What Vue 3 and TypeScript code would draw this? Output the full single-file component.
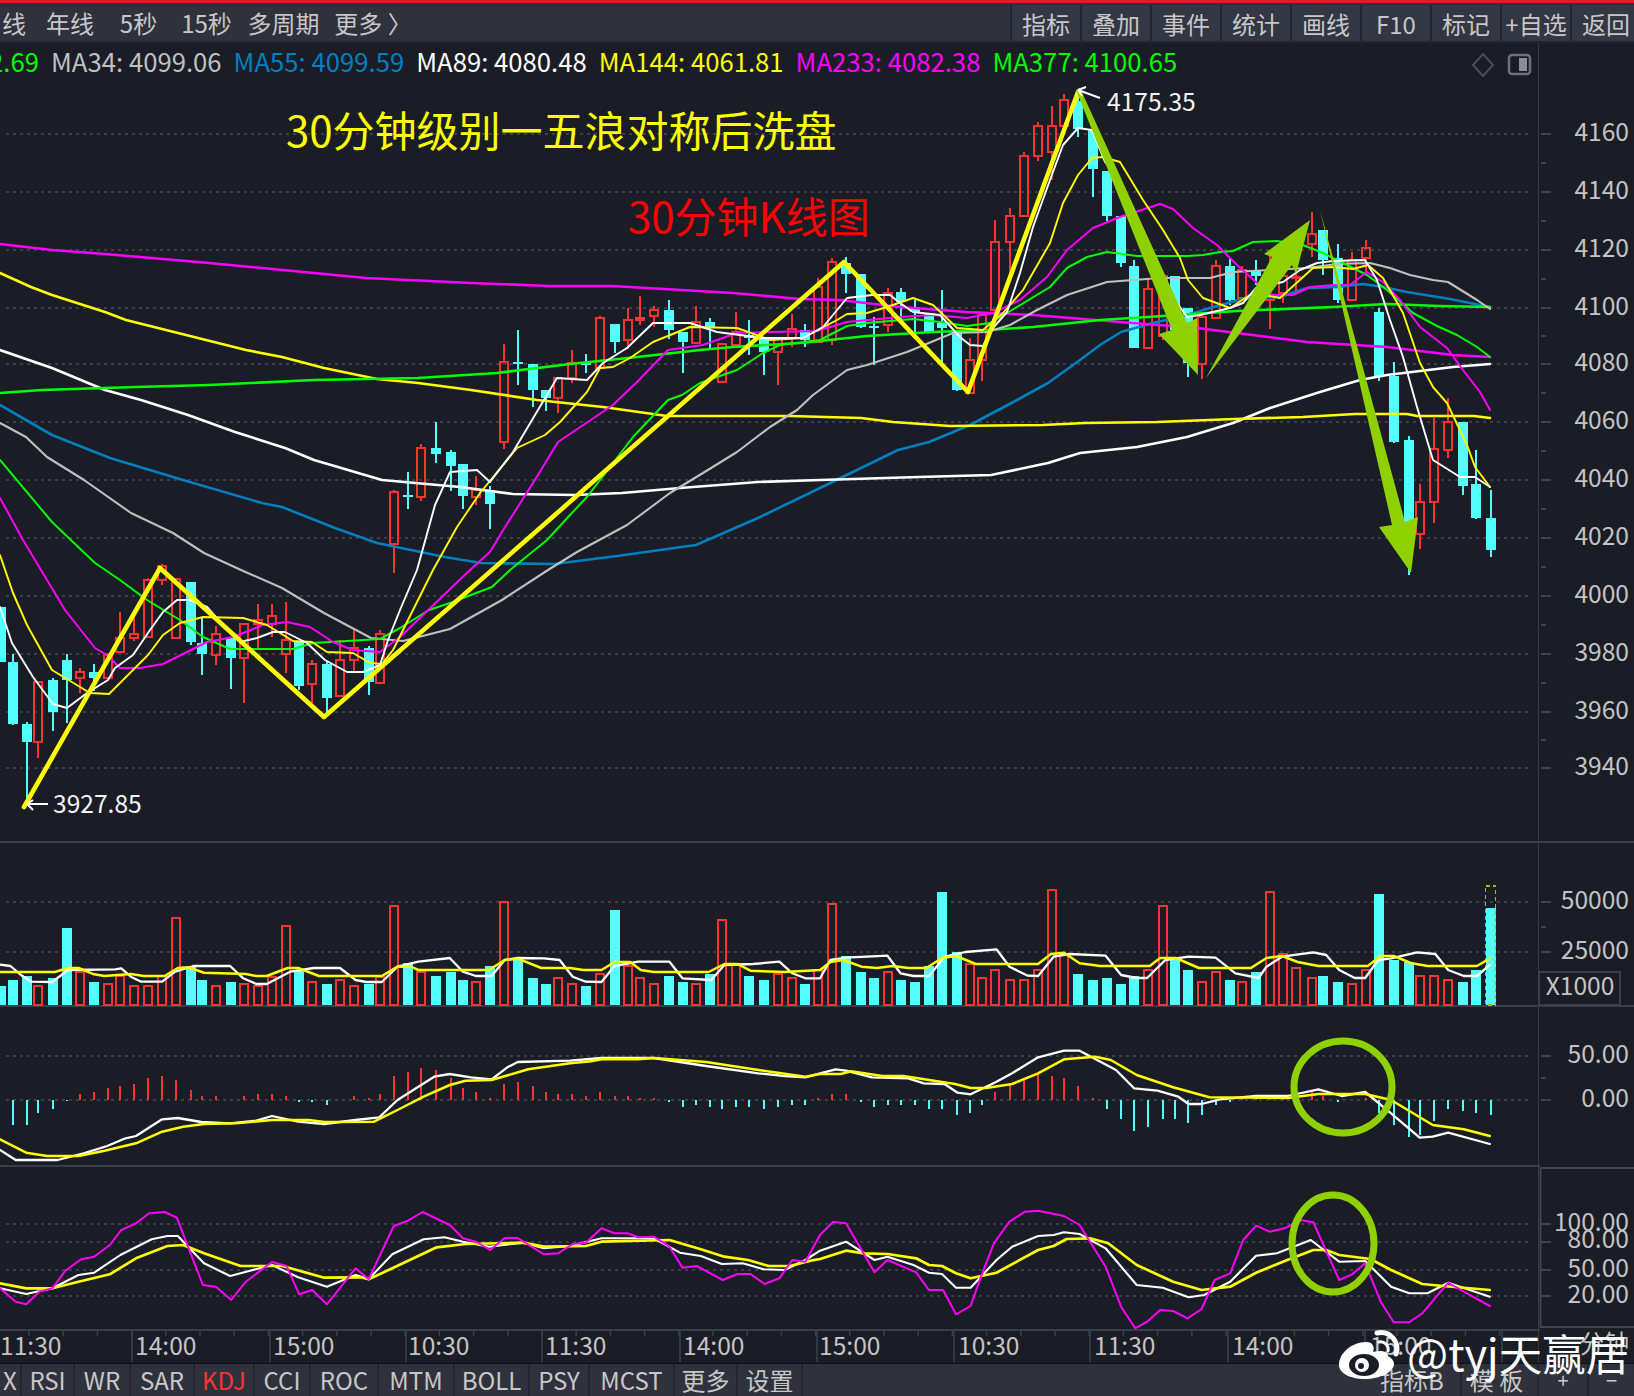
<script setup lang="ts">
type Candle = [number, number, number, number, number, number];

const periods = ['线', '年线', '5秒', '15秒', '多周期', '更多 〉'];
const tools = ['指标', '叠加', '事件', '统计', '画线', 'F10', '标记', '+自选', '返回'];
const indicators = ['X', 'RSI', 'WR', 'SAR', 'KDJ', 'CCI', 'ROC', 'MTM', 'BOLL', 'PSY', 'MCST', '更多', '设置'];
const extras = ['指标B', '模 板', '+', '−'];

const legend = [
  { text: '2.69', cls: 'green first' },
  { text: 'MA34: 4099.06', cls: 'grey' },
  { text: 'MA55: 4099.59', cls: 'blue' },
  { text: 'MA89: 4080.48', cls: 'white' },
  { text: 'MA144: 4061.81', cls: 'yellow' },
  { text: 'MA233: 4082.38', cls: 'magenta' },
  { text: 'MA377: 4100.65', cls: 'green' },
];

const candles: Candle[] = [
  [1,607,607,662,662,0],[13,654,662,724,725,0],[27,722,724,742,803,0],[38,681,682,742,758,1],[53,678,680,712,731,0],
  [66.5,654,660,680,723,0],[80,668,672,678,693,1],[94,664,672,678,691,0],[108,653,655,678,678,1],[120,612,638,652,652,1],
  [134,616,634,638,641,1],[148,578,580,637,637,1],[162,564,566,580,585,1],[176,579,579,638,638,1],[191,582,582,642,645,0],
  [202,617,643,654,675,0],[216,626,634,655,665,1],[231,638,638,658,689,0],[244,624,624,658,703,1],[258,604,620,624,650,1],
  [272,604,616,624,637,1],[286,602,640,654,673,1],[299,642,642,686,690,0],[312,660,664,684,703,1],[327,662,664,698,715,0],
  [340,640,660,696,696,1],[354,628,648,660,672,1],[369,646,648,682,695,0],[380,630,634,683,683,1],[394,490,492,544,573,1],
  [408,472,495,497,509,0],[421,444,448,497,501,1],[436,422,448,454,463,0],[451,450,452,466,491,0],[463,464,464,496,509,0],
  [476,476,490,497,505,1],[490,486,490,504,529,0],[504,344,362,442,449,1],[518,330,362,364,385,0],[533,364,364,390,407,0],
  [546,390,390,398,411,0],[558,378,378,398,413,1],[572,350,363,378,383,1],[586,354,363,365,373,0],[600,316,318,368,368,1],
  [615,324,324,342,353,0],[628,308,320,340,349,1],[640,296,318,320,325,1],[654,306,310,316,327,1],[669,300,310,330,339,0],
  [683,332,332,342,373,0],[696,306,322,343,343,1],[710,318,322,328,349,0],[722,344,344,382,382,1],[736,312,332,345,345,1],
  [749,320,335,338,355,0],[764,338,338,352,375,0],[778,338,338,352,385,1],[792,314,329,338,347,1],[805,324,330,340,347,0],
  [818,278,287,342,342,1],[832,258,262,340,345,1],[846,257,263,274,293,0],[861,274,274,327,328,0],[874,317,326,328,365,0],
  [888,288,293,325,332,1],[901,288,292,302,320,0],[915,300,307,312,332,0],[929,313,313,332,332,0],[942,290,323,328,363,0],
  [957,333,333,390,391,0],[970,338,360,393,394,1],[982,312,315,360,381,1],[995,220,242,310,310,1],[1010,208,216,242,273,1],
  [1024,152,156,216,216,1],[1038,122,126,156,161,1],[1052,106,126,152,180,1],[1064,94,100,126,126,1],[1078,90,101,129,137,0],
  [1093,129,129,169,197,0],[1107,171,171,216,221,0],[1121,216,216,263,267,0],[1134,260,266,348,348,0],[1148,280,289,348,348,1],
  [1163,276,276,336,340,1],[1175,276,276,330,330,0],[1188,308,308,363,377,0],[1202,315,317,364,379,1],[1216,260,266,318,318,1],
  [1230,259,266,300,305,0],[1242,266,270,298,298,1],[1256,260,270,276,285,0],[1270,256,297,300,329,1],[1283,264,276,293,303,1],
  [1296,257,277,278,293,1],[1312,212,234,244,257,1],[1323,230,230,260,275,0],[1338,244,258,300,303,0],[1352,252,260,300,300,1],
  [1366,240,248,258,273,1],[1379,308,312,377,381,0],[1394,362,376,442,443,0],[1409,436,440,525,575,0],[1420,484,502,534,549,1],
  [1434,418,449,502,523,1],[1448,398,422,450,458,1],[1463,422,422,486,495,0],[1476,450,484,518,519,0],[1490.5,490,518,550,557,0],
];

const volTops = [
  986,980,976,986,978,928,972,982,984,976,986,986,976,918,967,980,986,982,984,986,977,926,970,982,984,980,986,984,977,906,
  963,972,976,972,980,982,966,902,960,978,984,978,984,986,974,910,966,978,984,976,982,984,974,920,964,976,980,974,978,984,
  970,904,956,972,978,972,980,982,966,892,952,964,978,970,980,980,970,890,955,974,980,978,984,976,970,906,960,970,982,972,
  980,982,972,892,954,968,978,976,982,984,970,894,960,962,976,976,980,982,970,908,
];

const macdZ = [
  720,795,795,758,747,723,702,696,684,678,672,654,648,660,690,708,708,720,708,702,702,708,727,727,735,720,708,714,702,648,
  636,624,630,654,684,696,714,672,666,678,696,702,702,708,696,708,708,714,714,727,740,735,740,747,740,740,747,740,735,735,
  714,702,702,727,740,735,735,735,747,747,765,758,735,696,672,654,642,648,654,678,714,747,777,812,800,777,777,788,765,735,
  727,714,714,714,714,714,696,708,727,720,714,758,795,830,825,782,747,753,758,765,
];

const priceGrid = [
  { y: 134, t: '4160' }, { y: 192, t: '4140' }, { y: 250, t: '4120' }, { y: 308, t: '4100' },
  { y: 364, t: '4080' }, { y: 422, t: '4060' }, { y: 480, t: '4040' }, { y: 538, t: '4020' },
  { y: 596, t: '4000' }, { y: 654, t: '3980' }, { y: 712, t: '3960' }, { y: 768, t: '3940' },
];
const gridYs = [...priceGrid.map(g => g.y), 902, 952, 1056, 1100, 1224, 1242, 1270, 1296];
const minorTicks = [163, 221, 279, 336, 393, 451, 509, 567, 625, 683, 740, 927, 1078];
const axisLabels = [
  ...priceGrid.map(g => ({ y: g.y + 7, t: g.t })),
  { y: 909, t: '50000' }, { y: 959, t: '25000' }, { y: 1063, t: '50.00' }, { y: 1107, t: '0.00' },
  { y: 1231, t: '100.00' }, { y: 1248, t: '80.00' }, { y: 1277, t: '50.00' }, { y: 1303, t: '20.00' },
];
const timeLabels = [
  { x: 0, t: '11:30' }, { x: 135, t: '14:00' }, { x: 273, t: '15:00' }, { x: 408, t: '10:30' },
  { x: 545, t: '11:30' }, { x: 683, t: '14:00' }, { x: 819, t: '15:00' }, { x: 958, t: '10:30' },
  { x: 1094, t: '11:30' }, { x: 1232, t: '14:00' }, { x: 1370, t: '15:00' },
];
const longTicks = [132, 270, 406, 542, 680, 817, 954, 1090, 1228, 1365, 1502];
const shortTicks: number[] = [];
for (let x = 29; x < 1530; x += 34.2) shortTicks.push(x);

const real = (flat: number[]) => {
  const out: string[] = [];
  for (let i = 0; i < flat.length; i += 2) out.push(`${flat[i]},${flat[i + 1]}`);
  return out.join(' ');
};
const zoomed = (left: number[], right: number[], oy: number) => {
  const out: string[] = [];
  for (let i = 0; i < left.length; i += 2) out.push(`${(left[i] / 1.912).toFixed(1)},${(oy + left[i + 1] / 3).toFixed(1)}`);
  for (let i = 0; i < right.length; i += 2) out.push(`${(820 + right[i] / 1.926).toFixed(1)},${(oy + right[i + 1] / 3).toFixed(1)}`);
  return out.join(' ');
};

const maLines = [
  { c: '#0080c0', w: 2.6, p: real([0,405,52,435,110,458,183,480,262,503,282,507,335,528,377,543,445,557,481,563,554,564,617,556,696,545,758,518,820,488,898,450,929,442,970,425,1017,400,1048,383,1080,360,1100,345,1121,332,1153,323,1187,315,1220,305,1247,298,1280,297,1307,288,1337,287,1363,284,1383,287,1407,292,1450,299,1490,307]) },
  { c: '#ffffff', w: 2.6, p: real([0,350,52,368,105,390,141,400,188,415,235,432,285,448,314,460,382,480,460,487,513,494,575,495,622,493,680,488,758,482,820,480,919,477,991,475,1048,463,1080,453,1137,447,1187,437,1233,423,1270,408,1320,392,1360,380,1387,375,1453,367,1490,364]) },
  { c: '#ffff00', w: 2.6, p: real([0,273,31,287,52,295,105,312,126,320,178,333,246,350,282,357,324,368,377,379,418,383,471,390,537,400,603,407,667,416,790,416,861,418,893,422,950,426,1043,425,1085,423,1157,422,1235,419,1303,417,1355,414,1407,414,1417,416,1474,416,1490,418]) },
  { c: '#ff00ff', w: 2.6, p: real([0,244,52,250,105,254,209,263,314,273,366,278,471,283,549,286,612,286,733,293,800,299,840,300,900,307,967,312,1033,315,1083,319,1133,323,1197,328,1237,333,1307,342,1387,347,1453,355,1490,357]) },
  { c: '#00ff00', w: 2.6, p: real([0,393,42,390,136,387,209,385,314,380,418,378,497,373,570,364,628,358,700,350,733,347,800,343,867,336,933,332,987,330,1033,327,1100,320,1163,316,1237,311,1333,307,1387,304,1440,306,1490,307]) },
  { c: '#c0c0c0', w: 2.1, p: real([0,423,26,437,47,457,84,480,131,513,173,533,204,553,241,570,282,588,324,613,371,638,403,641,450,629,502,600,548,570,577,552,627,525,670,493,703,473,737,452,770,427,797,410,813,395,847,370,867,365,907,352,953,333,987,332,1010,325,1037,310,1067,295,1107,282,1160,278,1210,278,1233,272,1270,270,1307,268,1337,264,1370,263,1390,268,1410,275,1433,280,1448,282,1477,300,1490,309]) },
  { c: '#00ff00', w: 2, p: real([0,460,52,522,95,563,120,580,147,600,180,620,203,637,230,649,293,649,313,643,347,641,380,639,400,628,429,610,450,603,492,587,510,570,547,540,570,515,587,497,610,467,633,437,668,400,682,395,700,383,737,370,763,353,780,345,820,340,847,326,867,323,913,319,940,322,967,326,990,323,1007,313,1050,287,1067,268,1087,257,1107,252,1137,256,1187,256,1203,255,1220,252,1233,251,1253,242,1277,241,1303,245,1323,253,1347,265,1367,275,1387,290,1413,313,1437,326,1457,335,1477,347,1490,357]) },
  { c: '#ff00ff', w: 2, p: real([0,498,23,540,65,610,95,648,107,655,120,668,140,668,163,664,187,652,207,642,233,637,263,625,287,622,310,627,333,642,353,650,380,652,400,637,470,570,490,552,505,527,533,483,558,442,613,405,637,382,668,350,703,345,737,333,770,332,817,331,847,322,900,317,933,315,967,318,993,313,1020,300,1047,277,1067,250,1093,228,1120,217,1160,204,1173,209,1193,228,1217,245,1237,265,1257,283,1273,295,1293,295,1310,287,1333,285,1350,285,1367,272,1383,282,1400,300,1420,327,1447,348,1463,370,1480,392,1490,410]) },
  { c: '#ffff00', w: 1.9, p: real([0,555,13,593,27,625,52,670,90,693,109,694,133,670,148,655,163,635,180,623,203,617,243,618,267,625,293,641,312,642,327,652,353,653,370,663,382,664,393,650,433,570,457,527,480,493,517,448,545,435,560,422,587,392,600,368,613,367,630,358,653,342,690,327,737,328,770,340,803,338,837,320,847,314,867,313,887,307,913,298,933,305,957,328,983,330,1003,313,1023,290,1050,243,1063,203,1078,175,1092,158,1103,157,1120,162,1143,200,1163,230,1180,258,1188,280,1203,298,1230,308,1253,293,1280,298,1313,268,1333,267,1353,269,1368,265,1383,278,1403,313,1420,363,1433,387,1447,403,1467,445,1475,467,1490,487]) },
  { c: '#ffffff', w: 1.9, p: real([0,607,12,643,33,677,53,704,67,708,87,693,108,680,115,668,133,655,150,630,163,612,177,600,190,600,207,607,223,625,240,642,257,638,273,632,285,632,307,643,325,660,347,672,363,672,380,665,388,640,400,610,417,570,435,505,450,472,477,470,490,482,513,452,557,378,587,380,603,363,627,348,653,323,690,323,717,332,763,338,803,338,823,327,847,298,872,295,890,295,900,303,913,312,940,315,960,337,970,345,983,346,993,328,1007,312,1020,273,1033,227,1050,180,1063,145,1078,128,1092,130,1105,162,1120,180,1133,227,1170,293,1187,317,1200,315,1230,308,1243,303,1257,287,1283,282,1300,270,1317,263,1333,261,1365,260,1377,280,1390,320,1403,357,1417,407,1433,460,1460,477,1475,477,1490,487]) },
];

const volWhite = zoomed(
  [0,314,20,318,40,345,60,365,100,366,130,330,220,328,232,325,250,350,270,365,310,365,335,335,370,318,440,318,465,355,490,372,510,372,555,335,600,324,650,324,680,360,700,366,730,366,760,320,800,305,860,294,885,335,910,348,940,348,965,300,990,294,1040,295,1070,300,1095,350,1120,365,1150,366,1175,318,1220,305,1280,305,1305,355,1360,360,1385,315,1440,312,1490,305,1515,340,1540,355,1568,355],
  [20,300,50,293,130,287,155,340,180,348,210,348,240,290,280,276,340,268,365,320,400,347,420,348,450,290,480,282,550,287,580,345,610,354,630,354,665,300,710,290,762,293,800,340,845,354,860,320,890,290,950,277,975,285,1000,330,1030,354,1050,354,1075,300,1100,295,1150,277,1185,282,1210,330,1240,348,1265,348,1290,315],
  860);
const volYellow = zoomed(
  [0,336,105,336,130,324,150,324,180,343,200,348,250,342,275,348,315,348,340,324,360,322,390,338,470,342,490,348,510,348,550,324,570,324,610,348,730,348,760,320,785,320,800,330,935,330,965,300,990,296,1035,324,1090,324,1115,330,1150,330,1175,306,1205,306,1225,330,1250,336,1355,336,1385,312,1410,312,1435,332,1500,336,1568,330],
  [20,306,45,300,80,320,110,324,140,318,170,324,205,324,235,294,262,288,300,312,420,312,445,282,470,278,500,310,540,318,635,318,655,294,685,294,730,324,830,324,860,294,890,288,920,306,960,318,1055,318,1080,288,1105,288,1140,310,1170,318,1265,318,1290,296],
  860);
const macdWhite = zoomed(
  [0,870,30,900,110,900,160,880,205,858,240,835,260,828,310,778,340,774,385,786,440,790,490,782,520,768,570,785,620,792,680,780,725,772,760,720,800,680,830,650,860,642,900,652,940,658,970,622,990,606,1090,602,1150,594,1250,594,1350,618,1450,640,1500,648,1540,652,1568,640],
  [30,628,50,632,100,652,170,655,200,670,240,672,265,698,290,703,340,665,370,640,420,592,470,572,500,572,570,630,605,685,650,692,690,710,710,732,735,732,770,718,840,708,900,708,960,688,1005,708,1050,696,1100,760,1155,833,1180,830,1210,818,1290,852],
  860);
const macdYellow = zoomed(
  [0,838,50,878,90,888,150,888,200,872,260,850,310,815,350,800,390,792,450,790,520,780,590,780,620,786,715,785,760,750,810,710,860,675,890,662,940,660,1010,628,1090,610,1130,604,1150,598,1220,598,1250,594,1350,606,1450,630,1540,650,1568,642],
  [40,642,60,634,120,648,160,648,260,672,290,684,320,684,370,672,420,640,470,598,530,590,560,600,610,645,680,682,750,712,900,714,960,702,1050,702,1100,720,1180,795,1240,808,1290,828],
  860);
const kdjWhite = zoomed(
  [0,385,50,402,100,385,150,345,180,338,230,285,290,238,320,228,340,228,390,310,440,348,520,315,570,352,625,380,680,345,705,357,750,283,810,238,850,232,885,245,935,260,1000,248,1040,265,1090,258,1150,235,1250,235,1300,278,1340,288,1380,312,1420,310,1460,328,1500,330,1540,300],
  [0,272,50,245,105,300,130,290,180,315,210,338,235,342,262,383,290,383,340,300,370,260,420,228,450,225,470,217,500,222,550,265,610,375,660,383,710,412,740,405,790,365,840,287,880,280,945,240,1000,305,1050,303,1100,380,1135,400,1170,400,1210,368,1290,410],
  1160);
const kdjYellow = zoomed(
  [0,370,50,385,100,385,150,365,210,343,260,295,320,258,350,255,390,280,460,318,540,318,620,353,690,352,705,358,750,325,835,262,890,252,1000,248,1040,260,1120,258,1150,245,1280,240,1340,268,1385,290,1430,300,1470,318,1510,318,1550,302],
  [0,297,50,272,85,280,130,282,185,295,210,315,235,318,262,340,290,355,340,338,420,270,450,258,475,237,520,235,555,250,610,315,680,365,735,390,790,380,840,338,900,300,950,270,975,270,1000,285,1060,297,1100,330,1160,372,1200,378,1290,390],
  1160);
const kdjMagenta = zoomed(
  [0,385,30,425,50,433,75,395,100,385,125,332,155,298,180,290,210,255,232,210,260,190,285,160,315,156,338,173,388,375,413,380,442,420,470,365,520,306,548,318,572,403,597,390,625,433,680,325,705,358,753,198,780,182,808,156,860,195,885,235,910,245,937,270,965,234,990,234,1040,283,1067,280,1095,252,1120,248,1150,205,1175,220,1200,220,1220,232,1250,230,1280,260,1305,323,1332,318,1382,360,1410,342,1435,342,1462,372,1490,355,1515,300,1540,305],
  [0,225,25,186,50,190,105,337,130,300,185,337,210,390,237,390,262,463,290,438,310,350,335,250,365,185,395,155,420,152,470,168,500,195,550,320,580,440,607,505,630,485,655,450,680,453,708,475,735,447,760,360,790,340,815,240,840,197,866,215,895,205,925,180,950,187,1000,360,1025,343,1050,310,1080,425,1105,487,1135,487,1160,460,1210,368,1240,395,1290,438],
  1160);

const wave = '24,807 160,568 324,717 844,262 968,392 1078,92';
const arrows = [
  '1076,90 1080,88 1187,323 1197,318 1198,375 1159,334 1172,330',
  '1206,378 1272,257 1264,254 1310,220 1296,274 1292,265',
  '1320,210 1405,522 1418,517 1411,573 1379,527 1392,525',
];
</script>

<template>
  <div class="screen">
    <header class="toolbar">
      <nav class="periods">
        <span v-for="p in periods" :key="p" class="period">{{ p }}</span>
      </nav>
      <nav class="tools">
        <span v-for="t in tools" :key="t" class="tool">{{ t }}</span>
      </nav>
    </header>

    <main class="stage">
      <svg class="chart" width="1634" height="1320" viewBox="0 43 1634 1320">
        <!-- grid -->
        <line v-for="y in gridYs" :key="'g' + y" class="grid" x1="6" x2="1531" :y1="y" :y2="y" />
        <line class="sep" x1="0" x2="1634" y1="842" y2="842" />
        <line class="sep" x1="0" x2="1634" y1="1006" y2="1006" />
        <line class="sep" x1="0" x2="1540" y1="1166" y2="1166" />
        <line class="sep" x1="0" x2="1540" y1="1330" y2="1330" />
        <line class="axis" x1="1538.5" x2="1538.5" y1="43" y2="1363" />
        <line v-for="y in gridYs" :key="'t' + y" class="tick" x1="1541" x2="1551" :y1="y" :y2="y" />
        <line v-for="y in minorTicks" :key="'m' + y" class="tick" x1="1541" x2="1546" :y1="y" :y2="y" />

        <!-- candles -->
        <g class="crisp">
          <g v-for="c in candles" :key="'c' + c[0]">
            <template v-if="c[5]">
              <line class="up" :x1="c[0]" :x2="c[0]" :y1="c[1]" :y2="c[2]" />
              <line class="up" :x1="c[0]" :x2="c[0]" :y1="c[3]" :y2="c[4]" />
              <rect class="up-body" :x="c[0] - 4" :y="c[2]" width="8" :height="c[3] - c[2]" />
            </template>
            <template v-else>
              <line class="down" :x1="c[0]" :x2="c[0]" :y1="c[1]" :y2="c[4]" />
              <rect class="down-body" :x="c[0] - 5" :y="c[2]" width="10" :height="Math.max(c[3] - c[2], 2)" />
            </template>
          </g>
        </g>

        <polyline v-for="(m, i) in maLines" :key="'ma' + i" class="line" :points="m.p" :stroke="m.c" :stroke-width="m.w" />

        <polyline class="line" :points="wave" stroke="#ffff00" stroke-width="4.6" />
        <polygon v-for="(a, i) in arrows" :key="'a' + i" class="arrow" :points="a" />

        <!-- extreme labels -->
        <path class="leader" d="M1078 90 L1100 98 M1078 90 L1086 87 M1078 90 L1082 96" />
        <text class="num bright" x="1107" y="111">4175.35</text>
        <path class="leader" d="M27 804 L48 804 M27 804 L33 800 M27 804 L33 810" />
        <text class="num bright" x="53" y="813">3927.85</text>

        <text class="title yellow-fill" x="286" y="147">30分钟级别一五浪对称后洗盘</text>
        <text class="title red-fill" x="628" y="233">30分钟K线图</text>

        <!-- toolbar glyphs of the price pane -->
        <path class="diamond" d="M1483 54 L1493 65 L1483 76 L1473 65 Z" />
        <rect class="panel" x="1509" y="55" width="21" height="19" rx="3" />
        <rect class="panel-fill" x="1519" y="58" width="8" height="13" />

        <!-- volume -->
        <g class="crisp">
          <template v-for="(top, i) in volTops" :key="'v' + i">
            <rect v-if="candles[i][5]" class="up-body" :x="candles[i][0] - 4" :y="top" width="8" :height="1005 - top" />
            <rect v-else class="down-body" :x="candles[i][0] - 5" :y="top" width="10" :height="1005 - top" />
          </template>
          <rect class="pending" x="1485.5" y="886" width="10" height="119" />
        </g>
        <polyline class="line" :points="volWhite" stroke="#ffffff" stroke-width="2.3" />
        <polyline class="line" :points="volYellow" stroke="#ffff00" stroke-width="2.5" />

        <!-- MACD -->
        <g class="crisp">
          <template v-for="(z, i) in macdZ" :key="'h' + i">
            <line v-if="z !== 720" :class="z < 720 ? 'up' : 'down'" :x1="candles[i][0]" :x2="candles[i][0]" y1="1100" :y2="860 + z / 3" />
          </template>
        </g>
        <polyline class="line" :points="macdWhite" stroke="#ffffff" stroke-width="2.3" />
        <polyline class="line" :points="macdYellow" stroke="#ffff00" stroke-width="2.5" />
        <ellipse class="ring" cx="1343" cy="1087" rx="49" ry="46" />

        <!-- KDJ -->
        <polyline class="line" :points="kdjWhite" stroke="#ffffff" stroke-width="2.1" />
        <polyline class="line" :points="kdjYellow" stroke="#ffff00" stroke-width="2.7" />
        <polyline class="line" :points="kdjMagenta" stroke="#ff00ff" stroke-width="2" />
        <ellipse class="ring" cx="1333" cy="1243.5" rx="41" ry="48.5" />
        <path class="kdj-box" d="M1634 1168 H1540.5 V1327 H1634" />

        <!-- axes -->
        <text v-for="(l, i) in axisLabels" :key="'l' + i" class="num" x="1629" :y="l.y" text-anchor="end">{{ l.t }}</text>
        <rect class="unit-box" x="1539" y="972" width="81" height="33" />
        <text class="num" x="1580" y="995" text-anchor="middle">X1000</text>

        <line v-for="x in longTicks" :key="'lt' + x" class="time-tick" :x1="x" :x2="x" y1="1330" y2="1362" />
        <line v-for="x in shortTicks" :key="'st' + x" class="time-tick" :x1="x" :x2="x" y1="1330" y2="1336" />
        <text v-for="(l, i) in timeLabels" :key="'tl' + i" class="num" :x="l.x" y="1355">{{ l.t }}</text>
        <text class="num" x="1629" y="1353" text-anchor="end">分钟</text>
      </svg>

      <div class="legend">
        <span v-for="l in legend" :key="l.text" :class="l.cls">{{ l.text }}</span>
      </div>
    </main>

    <footer class="indicators">
      <nav class="ind-left">
        <span v-for="n in indicators" :key="n" class="ind" :class="{ active: n === 'KDJ' }">{{ n }}</span>
      </nav>
      <nav class="ind-right">
        <span v-for="n in extras" :key="n" class="ind">{{ n }}</span>
      </nav>
    </footer>

    <div class="watermark">
      <svg class="weibo" width="65" height="52" viewBox="1339 1327 65 52">
        <path d="M1339 1365 C1339 1353 1352 1342 1366 1342 C1373 1342 1375 1347 1373 1352 C1380 1350 1388 1351 1388 1356 C1392 1358 1394 1361 1394 1364 C1394 1372 1380 1379 1365 1379 C1350 1379 1339 1373 1339 1365 Z" />
        <ellipse class="weibo-dark" cx="1364" cy="1365" rx="15" ry="11" />
        <circle cx="1362" cy="1365" r="7" />
        <circle class="weibo-dark" cx="1361" cy="1366" r="3" />
        <path class="weibo-arc" d="M1377 1333 C1390 1330 1400 1342 1396 1354" />
        <path class="weibo-arc thin" d="M1379 1342 C1385 1341 1389 1346 1388 1351" />
      </svg>
      <span class="mark">@tyj天赢居</span>
    </div>
  </div>
</template>

<style scoped>
.screen {
  position: relative;
  width: 1634px;
  height: 1396px;
  display: flex;
  flex-direction: column;
  overflow: hidden;
  background: #1a1d26;
  color: #c8c8c8;
  font-family: "Noto Sans CJK SC", "Noto Sans", sans-serif;
  font-size: 24px;
}
.toolbar {
  flex: 0 0 43px;
  box-sizing: border-box;
  display: flex;
  justify-content: space-between;
  background: #2f313d;
  border-top: 3px solid #d8202a;
  border-bottom: 2px solid #23252e;
}
.periods {
  display: grid;
  grid-template-columns: 36px 68px 69px 67px 87px 92px;
  align-items: center;
  text-align: center;
  white-space: nowrap;
}
.period:first-child {
  text-align: right;
  padding-right: 10px;
}
.tools {
  display: flex;
  flex: 0 0 630px;
  margin-right: -6px;
  padding-top: 2px;
}
.tool {
  box-sizing: border-box;
  width: 70px;
  flex: 0 0 70px;
  display: flex;
  align-items: center;
  justify-content: center;
  white-space: nowrap;
  background: #333643;
  border-left: 2px solid #23252e;
}
.stage {
  flex: 0 0 1320px;
  position: relative;
  height: 1320px;
}
.chart {
  display: block;
}
.legend {
  position: absolute;
  left: 0;
  top: 3px;
  display: flex;
  gap: 12px;
  font-size: 25.7px;
  line-height: 30px;
  white-space: nowrap;
}
.legend .first {
  width: 39px;
  text-align: right;
  direction: rtl;
}
.green { color: #00ff00; }
.grey { color: #c0c0c0; }
.blue { color: #0080c0; }
.white { color: #ffffff; }
.yellow { color: #ffff00; }
.magenta { color: #ff00ff; }
.indicators {
  flex: 0 0 33px;
  display: flex;
  justify-content: space-between;
  background: #2f313d;
  border-top: 1px solid #101218;
  box-sizing: border-box;
  overflow: hidden;
}
.ind-left {
  display: grid;
  grid-template-columns: 22px 53px 56px 64px 60px 56px 68px 76px 75px 60px 85px 63px 65px;
}
.ind-right {
  display: grid;
  grid-template-columns: 92px 77px 50px 45px;
}
.ind {
  display: flex;
  align-items: center;
  justify-content: center;
  box-sizing: border-box;
  border-right: 2px solid #23252e;
  white-space: nowrap;
  line-height: 32px;
}
.ind.active { color: #ff3232; }
.ind-right .ind:nth-child(-n + 2) { padding-right: 6px; }
.ind-right .ind:last-child { border-right: 0; }
.ind-right .ind:nth-child(n + 3) {
  font-size: 20px;
}

.grid {
  stroke: #3a3f4b;
  stroke-width: 2;
  stroke-dasharray: 3 4;
}
.sep {
  stroke: #393e4b;
  stroke-width: 2;
}
.axis { stroke: #343945; stroke-width: 1; }
.tick { stroke: #3e434f; stroke-width: 2; }
.time-tick { stroke: #3a4050; stroke-width: 1.5; }
.crisp { shape-rendering: crispEdges; }
.up { stroke: #ff3232; stroke-width: 2; }
.down { stroke: #54ffff; stroke-width: 2; }
.up-body { fill: none; stroke: #ff3232; stroke-width: 2; }
.down-body { fill: #54ffff; }
.pending { fill: none; stroke: #b5b500; stroke-width: 1.5; stroke-dasharray: 4 3; }
.line {
  fill: none;
  stroke-linejoin: round;
  stroke-linecap: round;
}
.arrow { fill: #8fd000; }
.ring { fill: none; stroke: #8fd000; stroke-width: 7; }
.leader { fill: none; stroke: #ffffff; stroke-width: 2; }
.num {
  font-family: "Noto Sans CJK SC", "Noto Sans", sans-serif;
  font-size: 24.6px;
  fill: #c4c4c4;
}
.num.bright { fill: #f2f2f2; }
.title {
  font-family: "Noto Sans CJK SC", "Noto Sans", sans-serif;
  font-size: 42px;
}
.yellow-fill { fill: #ffff00; }
.red-fill { fill: #ff0000; }
.diamond { fill: none; stroke: #4a4e58; stroke-width: 2; }
.panel { fill: none; stroke: #6d717b; stroke-width: 2.5; }
.panel-fill { fill: #8a8d95; }
.kdj-box { fill: none; stroke: #3f4552; stroke-width: 2; }
.unit-box { fill: #1a1d26; stroke: #3a3f4c; stroke-width: 2; }
.watermark {
  position: absolute;
  left: 1339px;
  top: 1327px;
  display: flex;
  align-items: center;
  gap: 3px;
  height: 52px;
}
.weibo { display: block; fill: #ffffff; flex: 0 0 65px; }
.weibo-dark { fill: #1a1d26; }
.weibo-arc { fill: none; stroke: #ffffff; stroke-width: 5; stroke-linecap: round; }
.weibo-arc.thin { stroke-width: 3; }
.mark {
  font-size: 43.5px;
  line-height: 48px;
  color: #ffffff;
  white-space: nowrap;
}
</style>

<style>
html, body { margin: 0; background: #1a1d26; }
</style>
